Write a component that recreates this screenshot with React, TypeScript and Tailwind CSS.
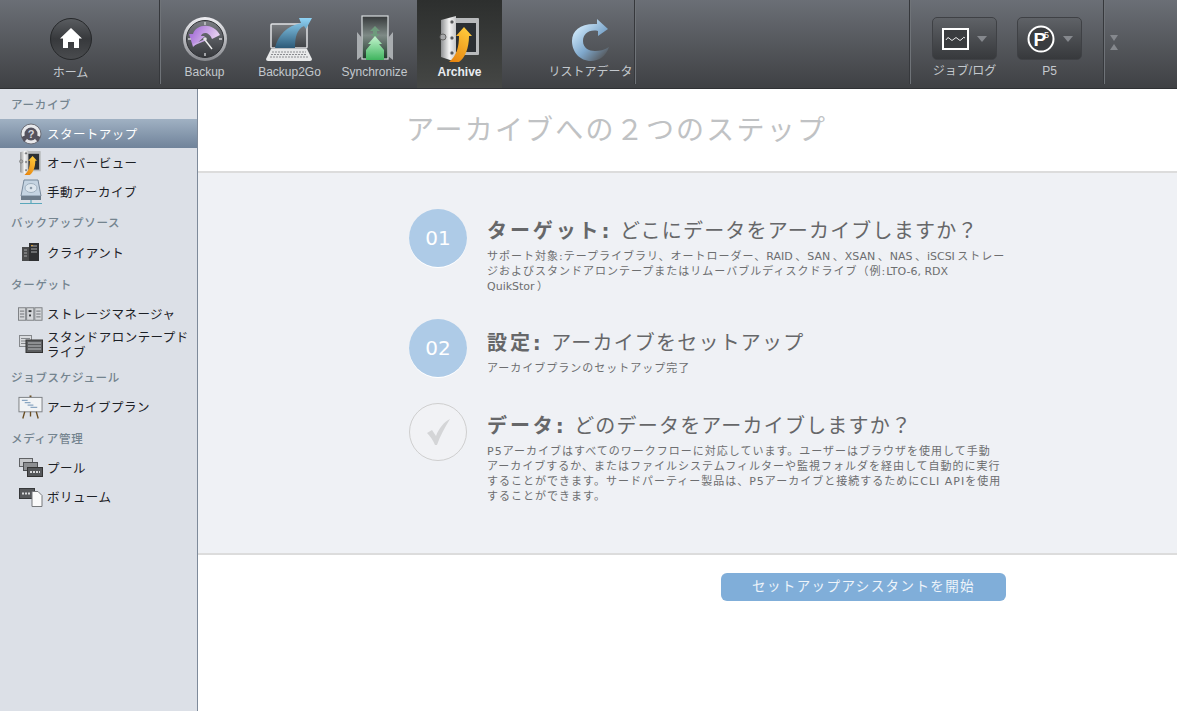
import type { ReactNode } from "react";

const jp = "font-['Liberation_Sans','Noto_Sans_CJK_JP',sans-serif]";
const body = "font-['DejaVu_Sans','Noto_Sans_CJK_JP',sans-serif]";

const HomeIcon = () => (
  <svg width="42" height="42" viewBox="0 0 42 42">
    <defs>
      <linearGradient id="homeBg" x1="0" y1="0" x2="0" y2="1">
        <stop offset="0" stopColor="#5a5d61" />
        <stop offset="0.5" stopColor="#37393c" />
        <stop offset="1" stopColor="#4a4c4f" />
      </linearGradient>
    </defs>
    <circle cx="21" cy="21" r="20.5" fill="url(#homeBg)" stroke="#26282a" />
    <path d="M21 10 L32 20.5 L29 20.5 L29 30 L24 30 L24 24 L18 24 L18 30 L13 30 L13 20.5 L10 20.5 Z" fill="#fff" />
  </svg>
);

const BackupIcon = () => (
  <svg width="48" height="48" viewBox="0 0 48 48">
    <defs>
      <linearGradient id="bkRing" x1="0" y1="0" x2="0" y2="1">
        <stop offset="0" stopColor="#eeeef2" />
        <stop offset="1" stopColor="#85878c" />
      </linearGradient>
      <linearGradient id="bkFace" x1="0" y1="0" x2="0" y2="1">
        <stop offset="0" stopColor="#7a7d83" />
        <stop offset="1" stopColor="#35373b" />
      </linearGradient>
      <linearGradient id="bkArrow" x1="0" y1="0" x2="1" y2="0.4">
        <stop offset="0" stopColor="#9a5fd4" />
        <stop offset="1" stopColor="#e9d3f2" />
      </linearGradient>
    </defs>
    <circle cx="24" cy="24" r="22" fill="url(#bkRing)" />
    <circle cx="24" cy="24" r="18.5" fill="url(#bkFace)" stroke="#2e3034" />
    <path d="M12 19 C15 9 32 7 39 20 L31 24 C28 16 21 17 20 21 L24 21 L12 32 L8 19 Z" fill="url(#bkArrow)" />
    <path d="M24 25 L31 34" stroke="#f2f2f2" strokeWidth="1.4" />
    <path d="M24 25 L12 30" stroke="#c9a9e6" strokeWidth="1.4" />
    <path d="M24 7 V10 M24 38 V41 M7 24 H10 M38 24 H41" stroke="#cfd0d4" strokeWidth="1.4" />
    <circle cx="24" cy="24" r="1.8" fill="#e4e4e6" />
  </svg>
);

const LaptopIcon = () => (
  <svg width="50" height="48" viewBox="0 0 50 48">
    <defs>
      <linearGradient id="lapArrow" x1="0" y1="0" x2="0" y2="1">
        <stop offset="0" stopColor="#90d4f6" />
        <stop offset="1" stopColor="#2d5a78" />
      </linearGradient>
      <linearGradient id="lapScreen" x1="0" y1="0" x2="0" y2="1">
        <stop offset="0" stopColor="#7b7e82" />
        <stop offset="1" stopColor="#3f4246" />
      </linearGradient>
    </defs>
    <rect x="6" y="9" width="36" height="24" rx="1" fill="url(#lapScreen)" stroke="#dfe1e3" strokeWidth="1.5" />
    <path d="M10 33 C13 20 22 11 36 8 L34 3 L47 3 L41 14 L39 11 C32 14 30 22 30 33 Z" fill="url(#lapArrow)" />
    <path d="M6 34 H42 L47 44 Q47 46 45 46 H3 Q1 46 1 44 Z" fill="#e8e9ea" />
    <path d="M7 37 H41 M6 39.5 H42 M5 42 H43" stroke="#8a8c90" strokeWidth="1" strokeDasharray="2 1" />
  </svg>
);

const SyncIcon = () => (
  <svg width="38" height="50" viewBox="0 0 38 50">
    <defs>
      <linearGradient id="syncBg" x1="0" y1="0" x2="0" y2="1">
        <stop offset="0" stopColor="#35383a" />
        <stop offset="0.45" stopColor="#7e8a86" />
        <stop offset="1" stopColor="#1f3a2a" />
      </linearGradient>
      <linearGradient id="syncArrow" x1="0" y1="0" x2="0" y2="1">
        <stop offset="0" stopColor="#c4f5cf" />
        <stop offset="1" stopColor="#3fb45e" />
      </linearGradient>
    </defs>
    <rect x="6" y="2" width="26" height="43" fill="url(#syncBg)" stroke="#d8dcde" strokeWidth="1.2" />
    <path d="M1 18 V46 L6 42 V24 Z M37 18 V46 L32 42 V24 Z" fill="#a9adb0" />
    <path d="M19 12 L24 17 H21 V20 L24 20 L19 24 L14 20 H17 V17 H14 Z" fill="#6e9a7c" />
    <path d="M19 22 L26 30 H23 L28 36 V46 H10 V36 L15 30 H12 Z" fill="url(#syncArrow)" />
  </svg>
);

const SafeIcon = ({ size = 46, id = "big" }: { size?: number; id?: string }) => (
  <svg width={(size * 42) / 46} height={size} viewBox="0 0 42 46">
    <defs>
      <linearGradient id={`safeArrow-${id}`} x1="0.7" y1="0" x2="0.2" y2="1">
        <stop offset="0" stopColor="#ffcb3c" />
        <stop offset="1" stopColor="#e8860f" />
      </linearGradient>
      <linearGradient id={`safeDoor-${id}`} x1="0" y1="0" x2="1" y2="0">
        <stop offset="0" stopColor="#8f9193" />
        <stop offset="0.55" stopColor="#f4f4f4" />
        <stop offset="1" stopColor="#c5c6c8" />
      </linearGradient>
    </defs>
    <rect x="15" y="2" width="25" height="37" rx="1" fill="#b8babc" />
    <rect x="17" y="7" width="20" height="29" fill="#2b2f33" />
    <path d="M2 4 L17 0 V46 L2 41 Z" fill={`url(#safeDoor-${id})`} />
    <circle cx="13" cy="6" r="2.2" fill="#55575a" stroke="#eee" />
    <circle cx="13" cy="22" r="2.2" fill="#55575a" stroke="#eee" />
    <circle cx="13" cy="37" r="2.2" fill="#55575a" stroke="#eee" />
    <circle cx="4" cy="21" r="3" fill="#a8a9ab" stroke="#666" />
    <path d="M25 11 L33 20 H30 C30 32 26 42 20 46 H10 C18 40 20 30 20 20 H17 Z" fill={`url(#safeArrow-${id})`} />
  </svg>
);

const RefreshIcon = () => (
  <svg width="40" height="44" viewBox="0 0 40 44">
    <defs>
      <linearGradient id="refFill" x1="0.2" y1="0.1" x2="0.9" y2="0.9">
        <stop offset="0" stopColor="#d2ebfd" />
        <stop offset="0.55" stopColor="#7fa8cc" />
        <stop offset="1" stopColor="#55585c" />
      </linearGradient>
    </defs>
    <path d="M26 2 L37 12 L27 19 L27 14 C18 12 12 17 12 24 C12 31 18 34 24 34 C29 34 33 33 38 30 C35 39 28 44 20 44 C9 44 1 35 1 24 C1 13 10 6 26 7 Z" fill="url(#refFill)" />
  </svg>
);

const NavItem = ({ icon, label, active }: { icon: ReactNode; label: string; active?: boolean }) => (
  <div
    className={`flex h-full w-[85px] flex-col items-center justify-end pb-[8px] ${
      active ? "bg-gradient-to-b from-[#2d2f2e] to-[#454745]" : ""
    }`}
  >
    <div className="flex h-[48px] items-center justify-center">{icon}</div>
    <span className={`mt-[1px] whitespace-nowrap text-[12px] leading-[16px] ${active ? "font-bold text-[#e8ecf0]" : "text-[#c3c8cd]"}`}>
      {label}
    </span>
  </div>
);

const Sep = () => <div className="mb-[4px] h-[84px] w-[2px] shrink-0 border-r border-r-[#6f7378] bg-[#36383c]" />;

const Caret = () => (
  <svg width="10" height="6" viewBox="0 0 10 6" className="ml-[8px]">
    <path d="M0 0 H10 L5 6 Z" fill="#85888d" />
  </svg>
);

const ToolButton = ({ icon, label }: { icon: ReactNode; label: string }) => (
  <div className="flex w-[65px] flex-col items-center">
    <div className="flex h-[43px] w-[65px] items-center justify-center rounded-[5px] border border-[#3f4145] bg-gradient-to-b from-[#5f6267] to-[#37393c]">
      {icon}
      <Caret />
    </div>
    <span className="mt-[3px] whitespace-nowrap text-[12px] leading-[16px] text-[#c3c8cd]">{label}</span>
  </div>
);

const sideIcons: Record<string, ReactNode> = {
  start: (
    <svg width="22" height="22" viewBox="0 0 22 22">
      <circle cx="11" cy="11" r="10" fill="#e8e9ec" stroke="#6d6f78" />
      <circle cx="11" cy="11" r="6.500" fill="#55525e" />
      <path d="M1.500 14 L6 12 L7 16 L4 19 Z M20.500 14 L16 12 L15 16 L18 19 Z" fill="#55525e" />
      <text x="11" y="15" textAnchor="middle" fontSize="11" fontWeight="700" fill="#d8d8de" fontFamily="Liberation Sans">?</text>
    </svg>
  ),
  overview: <SafeIcon size={25} id="small" />,
  manual: (
    <svg width="22" height="26" viewBox="0 0 22 26">
      <path d="M4 1 H18 L21 17 H1 Z" fill="#c5d4e2" stroke="#77889a" />
      <ellipse cx="11" cy="9" rx="6" ry="4.500" fill="#dde6ee" stroke="#9fb0bf" />
      <circle cx="11" cy="9" r="1.300" fill="#8a9aa9" />
      <rect x="1" y="17" width="20" height="4" fill="#6d7c8b" />
      <path d="M0 24.500 H22 M11 21 V24.500" stroke="#5aa7bb" strokeWidth="1.200" />
    </svg>
  ),
  client: (
    <svg width="20" height="20" viewBox="0 0 20 20">
      <rect x="1" y="5" width="7" height="14" fill="#4a4b4c" />
      <rect x="8" y="1" width="10" height="18" fill="#2f3032" />
      <path d="M10 4 H16 M10 7 H16 M10 10 H16 M3 8 H6 M3 11 H6 M3 14 H6" stroke="#a8a9aa" />
      <rect x="10" y="3" width="2" height="1" fill="#d59b35" />
    </svg>
  ),
  storage: (
    <svg width="26" height="16" viewBox="0 0 26 16">
      <rect x="0.500" y="1.500" width="7.500" height="13" fill="#d5d7da" stroke="#7d8084" />
      <rect x="9" y="1.500" width="7.500" height="13" fill="#d5d7da" stroke="#7d8084" />
      <rect x="17.500" y="1.500" width="7.500" height="13" fill="#d5d7da" stroke="#7d8084" />
      <path d="M2 5 H6.500 M2 8 H6.500 M2 11 H6.500 M19 5 H23.500 M19 8 H23.500 M19 11 H23.500" stroke="#6e7175" />
      <rect x="11" y="4" width="3" height="2" fill="#3a3c3e" />
      <rect x="11.500" y="8.500" width="2" height="2" fill="#3a3c3e" />
    </svg>
  ),
  drive: (
    <svg width="24" height="19" viewBox="0 0 24 19">
      <rect x="0.500" y="0.500" width="12" height="11" fill="#d9dbde" stroke="#85888c" />
      <path d="M2 3.500 H11 M2 6 H11 M2 8.500 H11" stroke="#85888c" />
      <rect x="7" y="5" width="16.500" height="12.500" fill="#5b5d5f" stroke="#333" />
      <path d="M9 8 H22 M9 11 H22 M9 14 H22" stroke="#bfc1c4" />
    </svg>
  ),
  plan: (
    <svg width="26" height="26" viewBox="0 0 26 26">
      <path d="M12 1 H14 V3 H12 Z" fill="#6b4e22" />
      <rect x="1" y="3" width="24" height="15" fill="#f1f3f5" stroke="#7c7f83" />
      <path d="M4 6 H10 M7 8.500 H13 M10 11 H16 M13 13.500 H20" stroke="#8aa6c2" strokeWidth="1.300" />
      <path d="M7 18 L5 25 M19 18 L21 25 M13 18 V23" stroke="#6b4e22" strokeWidth="1.400" />
    </svg>
  ),
  pool: (
    <svg width="24" height="19" viewBox="0 0 24 19">
      <rect x="0.500" y="0.500" width="13" height="8" fill="#c6c8cb" stroke="#606265" />
      <rect x="4.500" y="4.500" width="14" height="8" fill="#8d8f92" stroke="#4d4f52" />
      <rect x="8.500" y="9.500" width="15" height="9" fill="#55575a" stroke="#333" />
      <path d="M11 14 H21" stroke="#d8d9db" strokeDasharray="2 1" strokeWidth="2" />
    </svg>
  ),
  volume: (
    <svg width="24" height="21" viewBox="0 0 24 21">
      <rect x="0.500" y="2.500" width="15" height="10" fill="#57595c" stroke="#36383a" />
      <path d="M3 7.500 H11" stroke="#d8d9db" strokeDasharray="2 1" strokeWidth="2" />
      <path d="M13 5.500 H19 L23 9.500 V20.500 H13 Z" fill="#fafafa" stroke="#77797c" />
    </svg>
  ),
};

const SideHeader = ({ children, className }: { children: ReactNode; className?: string }) => (
  <div className={`flex h-[30px] items-center pl-[11px] pt-[4px] text-[11.500px] font-medium tracking-[0.7px] text-[#74848f] ${className ?? "mt-[2px]"}`}>{children}</div>
);

const SideRow = ({ icon, label, active, className }: { icon: string; label: string; active?: boolean; className?: string }) => (
  <div
    className={`flex items-center pl-[18px] pr-[4px] ${className ?? "h-[29px]"} ${
      active ? "bg-gradient-to-b from-[#a0b1c3] to-[#70839a] text-white" : "text-[#1c2026]"
    }`}
  >
    <div className="flex w-[29px] shrink-0 items-center justify-center pr-[4px]">{sideIcons[icon]}</div>
    <span className="pt-[4px] text-[12.500px] leading-[15px] tracking-[0.45px]">{label}</span>
  </div>
);

const StepBadge = ({ children }: { children: ReactNode }) => (
  <div className="flex h-[58px] w-[58px] shrink-0 items-center justify-center rounded-full bg-[#aecbe7] text-[20px] text-white shadow-[0_1px_0_#fff]">
    {children}
  </div>
);

// latin runs in the descriptions sit tight, the comma after them gets a little air
const L = ({ children }: { children: ReactNode }) => <span className="pr-[2.500px] tracking-normal">{children}</span>;

const Step = ({ badge, strong, title, text, className, textClass }: { badge: ReactNode; strong: string; title: string; text: ReactNode; className?: string; textClass?: string }) => (
  <div className={`flex gap-[20px] ${className ?? ""}`}>
    {badge}
    <div className={`w-[519px] ${textClass ?? "pt-[7px]"}`}>
      <h2 className="text-[20px] leading-[30px] tracking-[1.200px] text-[#666769]">
        <strong className="font-bold tracking-[2.900px]">{strong}</strong> {title}
      </h2>
      <p className="mt-[3px] whitespace-nowrap text-[11px] leading-[15px] tracking-[1px] text-[#6d6e70]">{text}</p>
    </div>
  </div>
);

export default function App() {
  return (
    <div className={`flex h-[711px] w-[1177px] flex-col overflow-hidden bg-white ${jp}`}>
      {/* top bar */}
      <header className="flex h-[89px] shrink-0 items-stretch border-b border-b-[#2f3134] bg-gradient-to-b from-[#6b6f76] to-[#3f4144]">
        <div className="flex h-full w-[141px] flex-col items-center justify-end pb-[7px]">
          <div className="flex h-[48px] items-center justify-center"><HomeIcon /></div>
          <span className="mt-[2px] text-[12px] leading-[16px] text-[#c3c8cd]">ホーム</span>
        </div>
        <div className="w-[18px]" />
        <Sep />
        <div className="w-[1px]" />
        <NavItem icon={<BackupIcon />} label="Backup" />
        <NavItem icon={<LaptopIcon />} label="Backup2Go" />
        <NavItem icon={<SyncIcon />} label="Synchronize" />
        <NavItem icon={<SafeIcon />} label="Archive" active />
        <div className="w-[46px]" />
        <div className="w-[86px]">
          <NavItem icon={<RefreshIcon />} label="リストアデータ" />
        </div>
        <Sep />
        <div className="flex-1" />
        <Sep />
        <div className="flex gap-[20px] pl-[21px] pr-[21px] pt-[17px]">
          <ToolButton
            label="ジョブ/ログ"
            icon={
              <svg width="27" height="22" viewBox="0 0 27 22">
                <rect x="1" y="1" width="25" height="20" fill="#3a3c3f" stroke="#fff" strokeWidth="2" />
                <path d="M4 12 Q6 8 8 11 T12 11 T16 11 T20 11 T23 10" fill="none" stroke="#fff" strokeWidth="0.9" />
              </svg>
            }
          />
          <ToolButton
            label="P5"
            icon={
              <svg width="28" height="28" viewBox="0 0 28 28">
                <circle cx="14" cy="14" r="12.500" fill="#3a3c3f" stroke="#fff" strokeWidth="2" />
                <text x="6.500" y="21" fontSize="19" fontWeight="700" fill="#fff" fontFamily="Liberation Sans">P</text>
                <text x="17" y="13" fontSize="9" fill="#fff" fontFamily="Liberation Sans">5</text>
              </svg>
            }
          />
        </div>
        <Sep />
        <div className="flex flex-col gap-[3px] pl-[5px] pt-[35px]">
          <div className="h-0 w-0 border-x-[4px] border-t-[6px] border-x-transparent border-t-[#85888d]" />
          <div className="h-0 w-0 border-x-[4px] border-b-[6px] border-x-transparent border-b-[#85888d]" />
        </div>
        <div className="w-[59px]" />
      </header>

      <div className="flex min-h-0 flex-1">
        {/* sidebar */}
        <aside className="w-[198px] shrink-0 border-r border-r-[#7e8a9a] bg-[#dce0e7]">
          <SideHeader className="mt-0">アーカイブ</SideHeader>
          <SideRow icon="start" label="スタートアップ" active />
          <SideRow icon="overview" label="オーバービュー" />
          <SideRow icon="manual" label="手動アーカイブ" />
          <SideHeader className="mt-[1px]">バックアップソース</SideHeader>
          <SideRow icon="client" label="クライアント" className="h-[30px]" />
          <SideHeader>ターゲット</SideHeader>
          <SideRow icon="storage" label="ストレージマネージャ" />
          <SideRow icon="drive" label="スタンドアロンテープドライブ" className="h-[32px]" />
          <SideHeader>ジョブスケジュール</SideHeader>
          <SideRow icon="plan" label="アーカイブプラン" />
          <SideHeader>メディア管理</SideHeader>
          <SideRow icon="pool" label="プール" />
          <SideRow icon="volume" label="ボリューム" />
        </aside>

        {/* main */}
        <main className={`flex min-w-0 flex-1 flex-col ${body}`}>
          <div className="flex h-[82px] shrink-0 items-center pl-[208px] pt-[2px]">
            <h1 className="whitespace-nowrap text-[28px] tracking-[2.200px] text-[#c0c2c4]">アーカイブへの２つのステップ</h1>
          </div>
          <section className="h-[384px] shrink-0 border-y-2 border-y-[#dcdcdc] bg-[#eff1f5] pl-[211px] pt-[36px]">
            <Step
              badge={<StepBadge>01</StepBadge>}
              strong="ターゲット:"
              title="どこにデータをアーカイブしますか？"
              text={<>サポート対象:テープライブラリ、オートローダー、<L>RAID</L>、<L>SAN</L>、<L>XSAN</L>、<L>NAS</L>、<L>iSCSI</L>ストレー<br />ジおよびスタンドアロンテープまたはリムーバブルディスクドライブ（例:<L>LTO-6, RDX</L><br /><L>QuikStor</L>）</>}
            />
            <Step
              className="mt-[25px]"
              textClass="pt-[9px]"
              badge={<StepBadge>02</StepBadge>}
              strong="設定:"
              title="アーカイブをセットアップ"
              text="アーカイブプランのセットアップ完了"
            />
            <Step
              className="mt-[26px]"
              textClass="pt-[8px]"
              badge={
                <div className="flex h-[58px] w-[58px] shrink-0 items-center justify-center rounded-full border border-[#cfcfcf] bg-[#f1f2f5]">
                  <svg width="26" height="28" viewBox="0 0 26 28">
                    <path d="M2 15 L7 12 L11 18 C14 10 19 4 25 1 C20 9 15 18 12 27 L10 27 C8 22 5 18 2 15 Z" fill="#d4d5d7" />
                  </svg>
                </div>
              }
              strong="データ:"
              title="どのデータをアーカイブしますか？"
              text={<>P5アーカイブはすべてのワークフローに対応しています。ユーザーはブラウザを使用して手動<br />アーカイブするか、またはファイルシステムフィルターや監視フォルダを経由して自動的に実行<br />することができます。サードパーティー製品は、P5アーカイブと接続するためにCLI APIを使用<br />することができます。</>}
            />
          </section>
          <div className="pl-[523px] pt-[18px]">
            <button className="h-[28px] w-[285px] rounded-[6px] bg-[#80aed9] pb-[2px] text-[13.500px] tracking-[1.400px] text-[#eef4fa]">
              セットアップアシスタントを開始
            </button>
          </div>
        </main>
      </div>
    </div>
  );
}
